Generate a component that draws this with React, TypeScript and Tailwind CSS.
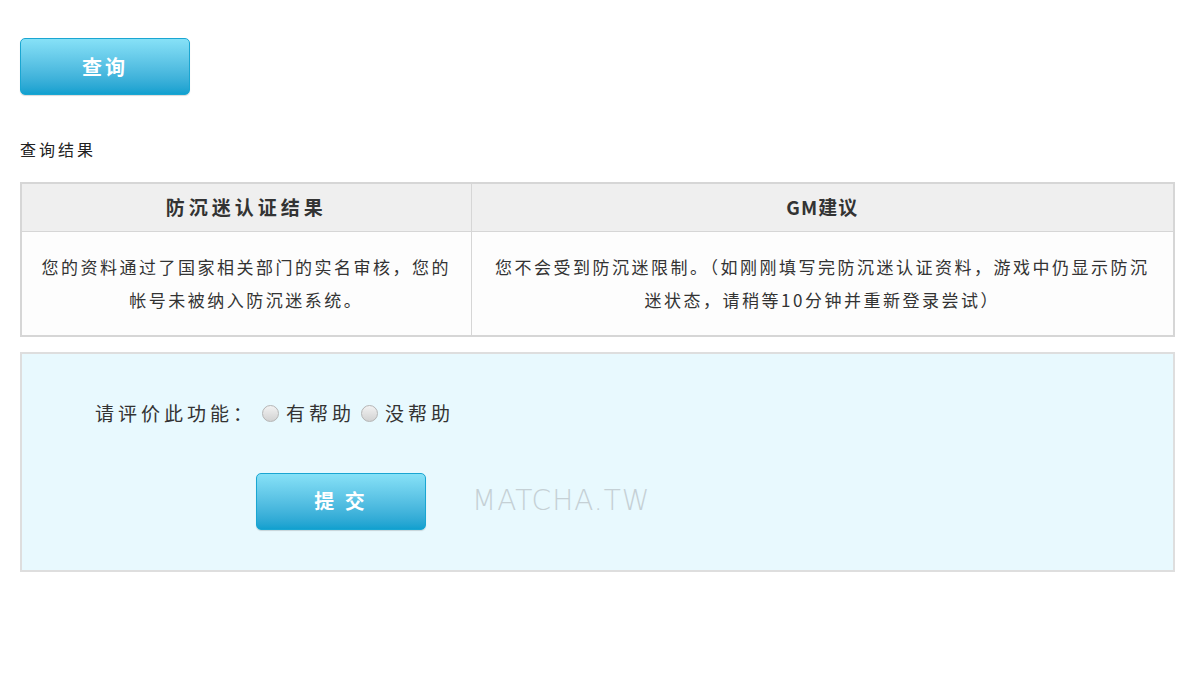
import React, { useState } from 'react';

const font = { fontFamily: '"Microsoft YaHei", "Noto Sans CJK SC", "Liberation Sans", sans-serif' };

const BlueButton: React.FC<{ label: string; className?: string }> = ({ label, className = '' }) => (
  <button
    className={`w-[170px] h-[57px] rounded-[5px] border border-[#1aa6d2] bg-gradient-to-b from-[#86e1f7] to-[#10a0cf] text-white text-[20px] font-bold tracking-[3px] shadow-[0_1px_1px_rgba(0,0,0,0.15)] ${className}`}
  >
    {label}
  </button>
);

const Radio: React.FC<{ checked: boolean; onClick: () => void; label: string }> = ({ checked, onClick, label }) => (
  <label className="flex items-center cursor-pointer" onClick={onClick}>
    <span className="w-[17px] h-[17px] rounded-full border border-[#b5b5b5] bg-gradient-to-b from-[#f2f2f2] to-[#d2d2d2] flex items-center justify-center">
      {checked && <span className="w-[7px] h-[7px] rounded-full bg-[#444]" />}
    </span>
    <span className="ml-[7px]">{label}</span>
  </label>
);

export default function App() {
  const [rating, setRating] = useState('');

  return (
    <div className="w-[1200px] h-[675px] bg-white text-[#333]" style={font}>
      <div className="pl-5 pr-[25px] pt-[38px]">
        {/* Query Button */}
        <BlueButton label="查询" />

        <p className="mt-[42px] text-[16px] leading-6 tracking-[3px] text-[#222]">查询结果</p>

        {/* Result Table */}
        <table className="mt-[21px] w-full border-collapse border-2 border-[#d6d6d6] text-[17px] tracking-[2.5px]">
          <thead>
            <tr className="bg-[#efefef]">
              <th className="w-[450px] h-[48px] border border-[#d6d6d6] text-[19px] tracking-[4px] font-bold text-[#333]">防沉迷认证结果</th>
              <th className="h-[48px] border border-[#d6d6d6] text-[19px] tracking-[1px] font-bold text-[#333]">GM建议</th>
            </tr>
          </thead>
          <tbody>
            <tr className="bg-[#fdfdfd]">
              <td className="h-[105px] border border-[#d6d6d6] px-4 text-center leading-[33px] text-[#333]">
                您的资料通过了国家相关部门的实名审核，您的帐号未被纳入防沉迷系统。
              </td>
              <td className="h-[105px] border border-[#d6d6d6] px-[15px] text-center leading-[33px] text-[#333]">
                您不会受到防沉迷限制。（如刚刚填写完防沉迷认证资料，游戏中仍显示防沉迷状态，请稍等10分钟并重新登录尝试）
              </td>
            </tr>
          </tbody>
        </table>

        {/* Feedback Panel */}
        <div className="mt-[15px] h-[220px] border-2 border-[#dedede] bg-[#e8f9fe]">
          <div className="flex items-center pl-[73px] pt-[45px] text-[19px] tracking-[4px] text-[#333]">
            <span>请评价此功能：</span>
            <span className="ml-[6px]">
              <Radio checked={rating === 'yes'} onClick={() => setRating('yes')} label="有帮助" />
            </span>
            <span className="ml-[6px]">
              <Radio checked={rating === 'no'} onClick={() => setRating('no')} label="没帮助" />
            </span>
          </div>

          <div className="flex items-center pl-[234px] mt-[45px]">
            <BlueButton label="提 交" />
            <span
              className="ml-[46px] text-[28px] tracking-[1px] text-[#c5d0d5]"
              style={{ fontFamily: '"DejaVu Sans", sans-serif', fontWeight: 300 }}
            >
              MATCHA.TW
            </span>
          </div>
        </div>
      </div>
    </div>
  );
}
